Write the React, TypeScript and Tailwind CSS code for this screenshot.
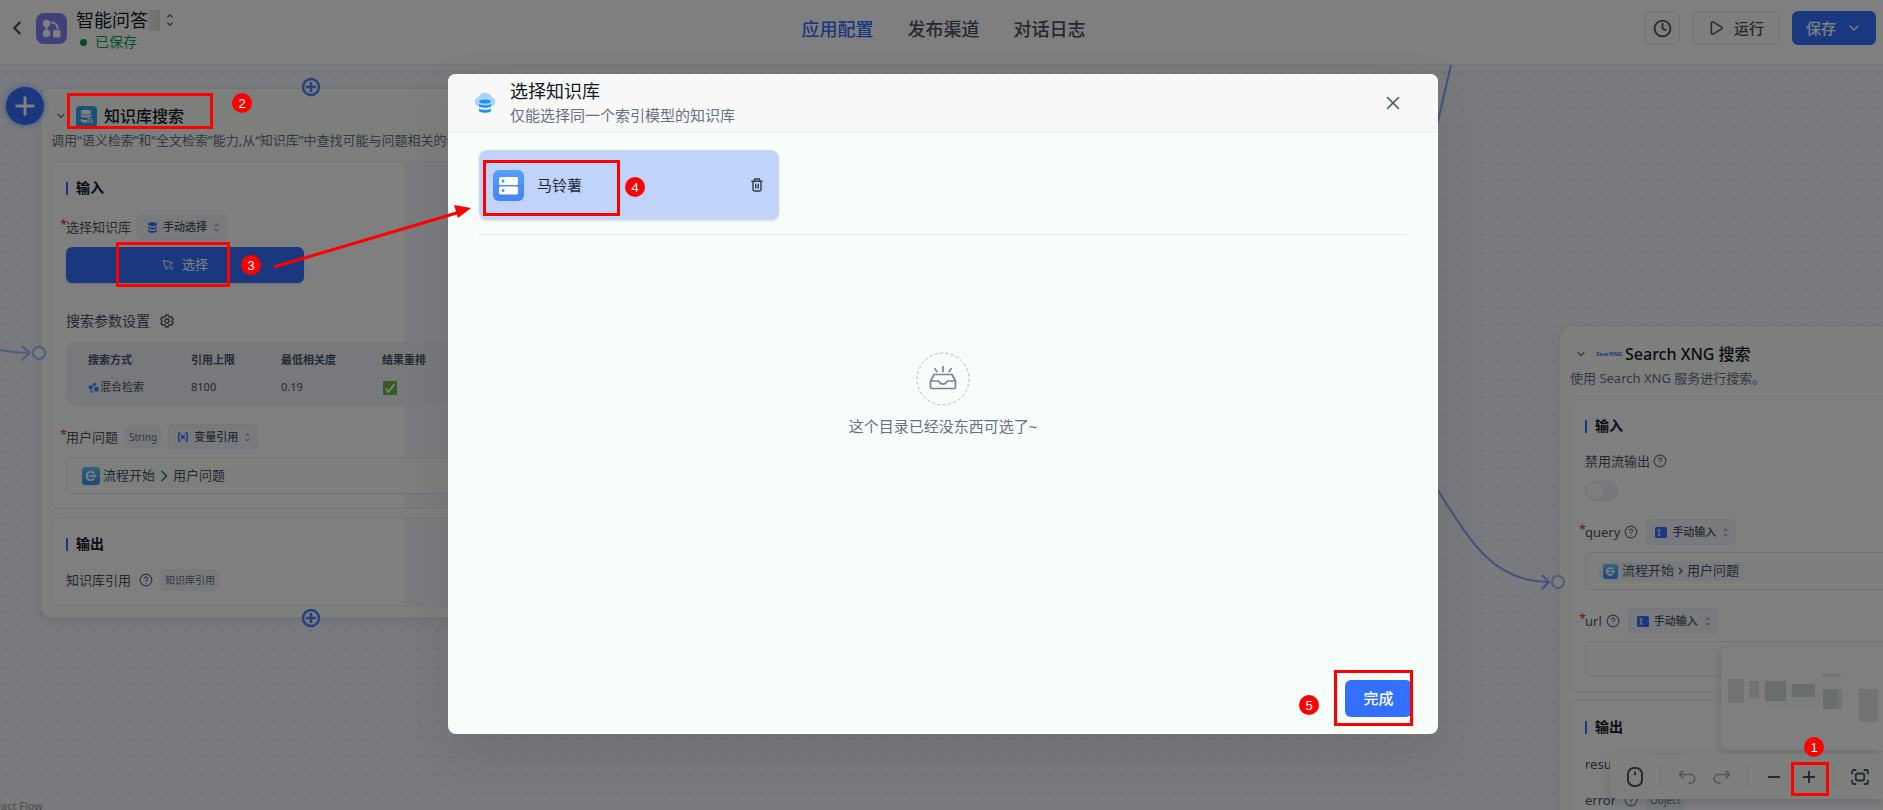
import React from 'react';
import { ChevronDown, ChevronLeft, CircleHelp, Clock, Play, X } from 'lucide-react';

function UpDown({ className }: { className: string }) {
  return (
    <svg viewBox="0 0 8 16" fill="none" stroke="currentColor" strokeWidth="1.6" strokeLinecap="round" strokeLinejoin="round" className={className}>
      <path d="M1.500 4.500 4 2 6.500 4.500M1.500 11.500 4 14 6.500 11.500" />
    </svg>
  );
}

function DatabaseGlyph({ className }: { className: string }) {
  return (
    <svg viewBox="0 0 12 12" fill="currentColor" className={className}>
      <ellipse cx="6" cy="2.400" rx="5" ry="2" />
      <path d="M1 4.600c1 1.300 3 1.500 5 1.500s4-.2 5-1.500v1.500c0 1.300-2.200 2-5 2s-5-.7-5-2z" />
      <path d="M1 8.300c1 1.300 3 1.500 5 1.500s4-.2 5-1.500v1.400c0 1.300-2.200 2-5 2s-5-.7-5-2z" />
    </svg>
  );
}

function VariableGlyph({ className }: { className: string }) {
  return (
    <svg viewBox="0 0 14 12" fill="none" stroke="currentColor" strokeWidth="1.7" strokeLinecap="round" className={className}>
      <path d="M3.500 1C2 1 2.300 2.500 2.300 4c0 1.300-.5 2-1.300 2 .8 0 1.300.7 1.300 2 0 1.500-.3 3 1.200 3M10.500 1c1.500 0 1.200 1.500 1.200 3 0 1.300.5 2 1.300 2-.8 0-1.300.7-1.300 2 0 1.500.3 3-1.200 3M5.300 4.300l3.400 3.400M8.700 4.300 5.300 7.700" />
    </svg>
  );
}

function ManualGlyph({ className }: { className: string }) {
  return (
    <svg viewBox="0 0 12 11" className={className}>
      <rect width="12" height="11" rx="1.500" fill="#3370ff" />
      <path d="M2.500 3h3M4 3v5M2.500 8h3" stroke="#fff" strokeWidth="1" />
    </svg>
  );
}

function StartIcon({ className }: { className: string }) {
  return (
    <svg viewBox="0 0 18 18" className={className}>
      <defs>
        <linearGradient id="startFill" x1="0" y1="0" x2="0" y2="1">
          <stop offset="0" stopColor="#61c6ff" />
          <stop offset="1" stopColor="#3a8df0" />
        </linearGradient>
      </defs>
      <rect width="18" height="18" rx="3.500" fill="url(#startFill)" />
      <path d="M11.500 5.900a4.100 4.100 0 1 0 0 6.200" fill="none" stroke="#fff" strokeWidth="2" strokeLinecap="round" />
      <path d="M7 9h5.500" fill="none" stroke="#fff" strokeWidth="1.600" strokeLinecap="round" />
      <path d="M11.800 6.800 14.800 9l-3 2.200z" fill="#fff" />
    </svg>
  );
}

function SectionTitle({ children }: { children: React.ReactNode }) {
  return (
    <h3 className="flex h-5 items-center gap-2 text-sm font-bold text-[#111824]">
      <span className="h-[13px] w-[2px] bg-[#3370ff]" />
      {children}
    </h3>
  );
}

function ModeSelect({ id, label, value, icon }: { id: string; label: string; value: string; icon: React.ReactNode }) {
  return (
    <div className="relative flex h-[26px] w-[90px] items-center rounded border border-[#ebeff4] bg-[#f0f4fa] text-[#485264]">
      <span className="pointer-events-none absolute left-2 flex w-3 justify-center text-[#3370ff]">{icon}</span>
      <select id={id} aria-label={label} className="h-full w-full appearance-none bg-transparent pl-[25px] text-[11px] font-medium outline-none">
        <option>{value}</option>
      </select>
      <UpDown className="pointer-events-none absolute right-[7px] h-[9px] w-[5px]" />
    </div>
  );
}

function FieldLabel({ htmlFor, required, children }: { htmlFor?: string; required?: boolean; children: React.ReactNode }) {
  return (
    <label htmlFor={htmlFor} className="relative text-[13px] leading-5 text-[#485264]">
      {required && <span className="absolute -top-[3px] -left-[6px] text-[#d92d20]">*</span>}
      {children}
    </label>
  );
}

function Tag({ children }: { children: React.ReactNode }) {
  return <span className="flex h-[22px] items-center rounded border border-[#edf1f6] bg-[#f0f4fa] px-[3px] text-[10px] text-[#667085]">{children}</span>;
}

function Help() {
  return <CircleHelp className="size-[14px] text-[#667085]" strokeWidth={2} />;
}

const nodeClass = 'absolute w-[542px] rounded-xl border border-[#e4e8ee] bg-[#fbfffa] px-[10px] pb-[11px] shadow-[0_4px_10px_rgba(19,51,107,0.08)]';
const panelClass = 'rounded-lg border border-[#eceff5] px-[14px] pb-[14px]';

function Header() {
  return (
    <header className="relative flex h-[65px] shrink-0 items-center justify-between border-b border-[#e8ebf0] bg-white pr-[7px] pb-2 pl-[6px]">
      <div className="flex items-center">
        <button aria-label="返回" className="text-[#485264]">
          <ChevronLeft className="size-[22px]" strokeWidth={2.500} />
        </button>
        <svg viewBox="0 0 31 31" className="ml-2 size-[31px]">
          <rect width="31" height="31" rx="8" fill="#7f83f0" />
          <g fill="#fff">
            <circle cx="10.500" cy="10.500" r="3.700" />
            <circle cx="10.500" cy="20.500" r="3.700" />
            <rect x="17" y="17" width="7.500" height="7.500" rx="1.500" />
          </g>
          <path d="M10.500 10.500v10M15.500 9.500c3.500 0 6 2.500 6 6" stroke="#fff" strokeWidth="2" fill="none" strokeLinecap="round" />
        </svg>
        <div className="ml-[9px] pt-1">
          <button className="flex h-6 items-center text-lg leading-6 text-[#111824]">
            智能问答
            <span className="h-[21px] w-3 bg-gradient-to-r from-[#ececec] to-[#dedede]" />
            <UpDown className="ml-[6px] h-[14px] w-2 text-[#667085]" />
          </button>
          <p className="flex h-5 items-center gap-2 pl-1 text-sm text-[#12a150]">
            <span className="size-[7px] rounded-full bg-[#039855]" />
            已保存
          </p>
        </div>
      </div>
      <nav className="absolute inset-x-0 top-[17px] mx-auto flex w-fit gap-[34px] pl-1 text-lg leading-6 font-medium text-[#485264]">
        <a href="#config" className="text-[#3370ff]">应用配置</a>
        <a href="#publish">发布渠道</a>
        <a href="#logs">对话日志</a>
      </nav>
      <div className="flex gap-[13px] text-[15px] font-medium">
        <button aria-label="历史版本" className="flex h-[34px] w-[35px] items-center justify-center rounded-md border border-[#dfe5ec] bg-[#fbfffa] text-[#485264]">
          <Clock className="size-[19px]" strokeWidth={2.300} />
        </button>
        <button className="flex h-[34px] w-[86px] items-center justify-center gap-[10px] rounded-md border border-[#dfe5ec] bg-[#fbfffa] text-[#485264]">
          <Play className="size-4" strokeWidth={2.300} />
          运行
        </button>
        <button className="flex h-[34px] w-[84px] items-center justify-center gap-[10px] rounded-md bg-[#3370ff] text-white">
          保存
          <ChevronDown className="size-4" strokeWidth={2} />
        </button>
      </div>
    </header>
  );
}

function SearchNode() {
  const split = 'bg-[linear-gradient(to_right,#ffffff_68%,#f4f7fd_68%)]';
  return (
    <section className={`${nodeClass} top-[23px] left-10`}>
      <div className="mt-[15px] flex h-6 items-center">
        <ChevronDown className="ml-1 size-3 text-[#667085]" strokeWidth={2.500} />
        <svg viewBox="0 0 22 22" className="ml-[9px] size-[21px]">
          <rect width="22" height="22" rx="4" fill="#35a5ee" />
          <ellipse cx="10.500" cy="6.500" rx="5.500" ry="2.500" fill="#fff" />
          <path d="M5 8.500c1.500 2 9.500 2 11 0v2.300c-1.500 2-9.500 2-11 0zM5 13c1 1.500 4.500 2 6.500 1.700l.7 2.600C9 17.800 5.700 17.200 5 15.500z" fill="#fff" />
          <circle cx="14.500" cy="14.800" r="2" fill="none" stroke="#fff" strokeWidth="1.200" />
          <path d="m16 16.400 1.500 1.500" stroke="#fff" strokeWidth="1.200" />
        </svg>
        <h2 className="ml-[7px] text-base font-medium text-[#111824]">知识库搜索</h2>
      </div>
      <p className="mt-[2px] mb-[11px] h-5 overflow-hidden text-[13px] leading-5 whitespace-nowrap text-[#667085]">
        调用“语义检索”和“全文检索”能力,从“知识库”中查找可能与问题相关的参考内容
      </p>

      <div className={`${panelClass} ${split} pt-4`}>
        <SectionTitle>输入</SectionTitle>
        <div className="mt-4 flex h-[26px] items-center gap-[6px]">
          <FieldLabel htmlFor="kb-mode" required>选择知识库</FieldLabel>
          <ModeSelect id="kb-mode" label="选择知识库" value="手动选择" icon={<DatabaseGlyph className="size-[11px]" />} />
        </div>
        <button className="mt-[7px] flex h-9 w-[238px] items-center justify-center gap-2 rounded-md bg-[#3370ff] text-[13px] text-white shadow-sm">
          <svg viewBox="0 0 12 12" fill="none" stroke="currentColor" strokeWidth="1" strokeLinejoin="round" className="size-3">
            <path d="M1 1.300 10.500 3.700 7.500 5.800 11 9.400 9.500 11 6 7.400 4.200 10.500Z" />
          </svg>
          选择
        </button>
        <div className="mt-7 flex h-5 items-center gap-2 text-sm text-[#485264]">
          搜索参数设置
          <button aria-label="搜索参数设置" className="ml-[2px]">
            <svg viewBox="0 0 14 14" fill="none" stroke="currentColor" strokeWidth="1.300" strokeLinejoin="round" className="size-[14px]">
              <path d="M5.700 1h2.600l.5 1.700 1.300.8 1.800-.5 1.300 2.200L12 6.500v1l1.200 1.300-1.300 2.200-1.800-.5-1.300.8L8.300 13H5.700l-.5-1.700-1.300-.8-1.800.5L.8 8.800 2 7.500v-1L.8 5.200 2.100 3l1.800.5 1.300-.8z" />
              <circle cx="7" cy="7" r="2" />
            </svg>
          </button>
        </div>
        <div className="mt-[11px] rounded-lg bg-[#eef3fb] py-[5px] pl-[22px]">
          <table className="w-full table-fixed border-collapse text-left text-[11px] text-[#485264]">
            <thead>
              <tr className="h-[27px]">
                <th className="w-[103px] p-0 font-bold">搜索方式</th>
                <th className="w-[90px] p-0 font-bold">引用上限</th>
                <th className="w-[101px] p-0 font-bold">最低相关度</th>
                <th className="p-0 font-bold">结果重排</th>
              </tr>
            </thead>
            <tbody>
              <tr className="h-[27px]">
                <td className="p-0">
                  <span className="flex items-center gap-[1px]">
                    <svg viewBox="0 0 12 12" fill="#2e8bff" className="size-[11px]">
                      <circle cx="7" cy="2.500" r="1.800" />
                      <circle cx="3" cy="5.700" r="2.400" />
                      <circle cx="9" cy="8" r="2.700" />
                      <circle cx="4" cy="10.300" r="1.400" />
                    </svg>
                    混合检索
                  </span>
                </td>
                <td className="p-0">8100</td>
                <td className="p-0">0.19</td>
                <td className="p-0">
                  <svg viewBox="0 0 14 14" className="ml-[1px] size-[14px]">
                    <rect width="14" height="14" rx="1" fill="#6fb53c" />
                    <path d="m2.500 7.500 3 3.500 6-8" fill="none" stroke="#fff" strokeWidth="1.900" />
                  </svg>
                </td>
              </tr>
            </tbody>
          </table>
        </div>
        <div className="mt-[18px] flex h-[26px] items-center gap-[7px]">
          <FieldLabel htmlFor="question-mode" required>用户问题</FieldLabel>
          <Tag>String</Tag>
          <ModeSelect id="question-mode" label="用户问题" value="变量引用" icon={<VariableGlyph className="h-3 w-[14px]" />} />
        </div>
        <button className="mt-[7px] flex h-[37px] w-full items-center rounded-md border border-[#e2e7ee] bg-[#fbfffa] pl-[15px] text-[13px] text-[#485264]">
          <StartIcon className="mr-[3px] size-[18px]" />
          流程开始
          <svg viewBox="0 0 8 12" fill="none" stroke="currentColor" strokeWidth="1.400" className="mx-[5px] h-3 w-2">
            <path d="m1.500 1 5 5-5 5" />
          </svg>
          用户问题
        </button>
      </div>

      <div className={`${panelClass} ${split} mt-2 pt-4`}>
        <SectionTitle>输出</SectionTitle>
        <div className="mt-[15px] flex h-[22px] items-center gap-2">
          <FieldLabel>知识库引用</FieldLabel>
          <Help />
          <Tag>知识库引用</Tag>
        </div>
      </div>
    </section>
  );
}

function XngNode() {
  return (
    <section className={`${nodeClass} top-[260px] left-[1559px]`}>
      <div className="mt-4 flex h-6 items-center">
        <ChevronDown className="ml-[5px] size-3 text-[#667085]" strokeWidth={2.500} />
        <span className="ml-[9px] w-[22px] text-center text-[6px] font-bold text-[#3370ff]">SearXNG</span>
        <h2 className="ml-[7px] text-base font-medium text-[#111824]">Search XNG 搜索</h2>
      </div>
      <p className="mt-[2px] h-5 text-[13px] leading-5 text-[#667085]">使用 Search XNG 服务进行搜索。</p>

      <div className={`${panelClass} mt-[11px] bg-white pt-4`}>
        <SectionTitle>输入</SectionTitle>
        <div className="mt-[15px] flex h-5 items-center gap-[3px]">
          <FieldLabel htmlFor="no-stream">禁用流输出</FieldLabel>
          <Help />
        </div>
        <input
          id="no-stream"
          type="checkbox"
          role="switch"
          className="mt-[10px] block h-5 w-[33px] appearance-none rounded-full border border-[#e6eaf0] bg-[#edf0f7] before:block before:size-[16px] before:translate-x-px before:translate-y-px before:rounded-full before:bg-[#fbfffa] checked:bg-[#3370ff] checked:before:translate-x-3"
        />
        <div className="mt-[18px] flex h-[26px] items-center gap-1">
          <FieldLabel htmlFor="query-mode" required>query</FieldLabel>
          <Help />
          <div className="ml-1">
            <ModeSelect id="query-mode" label="query" value="手动输入" icon={<ManualGlyph className="h-[11px] w-3" />} />
          </div>
        </div>
        <button className="mt-[7px] flex h-[38px] w-full items-center rounded-md border border-[#e2e7ee] bg-[#fbfffa] pl-3 text-[13px] text-[#485264]">
          <span className="flex h-[19px] items-center rounded bg-[#f0f4fa] px-[5px]">
            <StartIcon className="mr-1 size-[15px]" />
            流程开始
            <svg viewBox="0 0 5 8" fill="none" stroke="currentColor" strokeWidth="1.200" className="mx-1 h-2 w-[5px]">
              <path d="m1 1 3 3-3 3" />
            </svg>
            用户问题
          </span>
        </button>
        <div className="mt-[18px] flex h-[26px] items-center gap-1">
          <FieldLabel htmlFor="url-value" required>url</FieldLabel>
          <Help />
          <div className="ml-1">
            <ModeSelect id="url-mode" label="url" value="手动输入" icon={<ManualGlyph className="h-[11px] w-3" />} />
          </div>
        </div>
        <input id="url-value" type="text" className="mt-[7px] block h-9 w-full rounded-md border border-[#e2e7ee] bg-[#fbfffa] px-3 text-[13px]" />
      </div>

      <div className={`${panelClass} mt-2 bg-white pt-4`}>
        <SectionTitle>输出</SectionTitle>
        <div className="mt-4 flex h-[22px] items-center gap-2">
          <FieldLabel>result</FieldLabel>
          <Help />
          <Tag>String</Tag>
        </div>
        <div className="mt-[14px] flex h-[22px] items-center gap-2">
          <FieldLabel>error</FieldLabel>
          <Help />
          <Tag>Object</Tag>
        </div>
      </div>
    </section>
  );
}

function Edges() {
  return (
    <svg className="pointer-events-none absolute inset-0 h-full w-full" fill="none" stroke="#9db8ff" strokeWidth="2">
      <path d="M0 285 C10 287 18 288 29 288M22 281l8 7-8 7" />
      <path d="M1451 0 1430 90" stroke="#7ea4ff" />
      <path d="M1430 413C1470 475 1490 516 1548 517M1542 510l7 7-7 7" stroke="#7ea4ff" />
      <circle cx="39" cy="288" r="6" fill="#fbfffa" />
      <circle cx="1558" cy="517" r="6" fill="#fbfffa" />
      <g stroke="#4f7cff" fill="#f0f4fa" strokeWidth="2.500">
        <circle cx="311" cy="22" r="8" />
        <circle cx="311" cy="553" r="8" />
        <path d="M306 22h10M311 17v10M306 553h10M311 548v10" />
      </g>
    </svg>
  );
}

function MiniMap() {
  return (
    <div className="absolute right-0 bottom-[60px] h-[103px] w-[162px] rounded-l-lg bg-white shadow-[-2px_2px_8px_rgba(19,51,107,0.15)]">
      <svg viewBox="0 0 162 103" className="h-full w-full" fill="#e6e6e6">
        <rect x="42" y="33" width="74" height="28" fill="#fbfffa" />
        <rect x="7" y="32" width="16" height="24" />
        <rect x="28" y="34" width="10" height="17" />
        <rect x="44" y="34" width="21" height="20" fill="#d3dcd4" />
        <rect x="71" y="37" width="23" height="13" fill="#d3dcd4" />
        <rect x="101" y="27" width="19" height="3" />
        <rect x="102" y="42" width="14" height="20" fill="#d3dcd4" />
        <rect x="116" y="42" width="5" height="20" />
        <rect x="138" y="42" width="19" height="33" />
      </svg>
    </div>
  );
}

function Toolbar() {
  return (
    <div className="absolute right-0 bottom-[11px] flex h-[45px] w-[273px] items-center rounded-l-lg bg-[#fbfffa] pl-4 text-[#485264] shadow-[0_4px_12px_rgba(19,51,107,0.18)]">
      <button aria-label="鼠标模式" className="flex w-[18px] justify-center">
        <svg viewBox="0 0 16 20" fill="none" stroke="currentColor" strokeWidth="2" strokeLinecap="round" className="h-5 w-4">
          <rect x="1" y="1" width="14" height="18" rx="6" />
          <path d="M8 5.500v2" />
        </svg>
      </button>
      <span className="ml-4 h-[21px] w-px bg-[#e2e7ee]" />
      <button aria-label="撤销" className="ml-[17px] text-[#a5abb6]">
        <svg viewBox="0 0 18 14" fill="none" stroke="currentColor" strokeWidth="1.600" strokeLinecap="round" strokeLinejoin="round" className="h-[14px] w-[18px]">
          <path d="M5 1 1.500 4.500 5 8M2 4.500h10.500a4 4 0 0 1 0 8.500H11" />
        </svg>
      </button>
      <button aria-label="重做" className="ml-[17px] text-[#a5abb6]">
        <svg viewBox="0 0 18 14" fill="none" stroke="currentColor" strokeWidth="1.600" strokeLinecap="round" strokeLinejoin="round" className="h-[14px] w-[18px]">
          <path d="M13 1l3.500 3.500L13 8M16 4.500H5.500a4 4 0 0 0 0 8.500H7" />
        </svg>
      </button>
      <span className="ml-4 h-[21px] w-px bg-[#e2e7ee]" />
      <button aria-label="缩小" className="ml-[19px]">
        <svg viewBox="0 0 14 14" stroke="currentColor" strokeWidth="2" className="size-[14px]"><path d="M1 7h12" /></svg>
      </button>
      <button aria-label="放大" className="ml-[21px]">
        <svg viewBox="0 0 14 14" stroke="currentColor" strokeWidth="2" className="size-[14px]"><path d="M1 7h12M7 1v12" /></svg>
      </button>
      <span className="ml-[17px] h-[21px] w-px bg-[#e2e7ee]" />
      <button aria-label="适应视图" className="ml-[17px]">
        <svg viewBox="0 0 18 16" fill="none" stroke="currentColor" strokeWidth="1.800" strokeLinecap="round" className="h-4 w-[18px]">
          <path d="M1 4.500V3a2 2 0 0 1 2-2h1.500M13.500 1H15a2 2 0 0 1 2 2v1.500M17 11.500V13a2 2 0 0 1-2 2h-1.500M4.500 15H3a2 2 0 0 1-2-2v-1.500" />
          <rect x="4.800" y="4.500" width="8.400" height="7" rx="1.500" />
        </svg>
      </button>
    </div>
  );
}

function Marker({ n, className }: { n: number; className: string }) {
  return (
    <span className={`pointer-events-none absolute flex size-5 items-center justify-center rounded-full bg-[#ff0000] font-['Liberation_Sans',sans-serif] text-[13px] leading-none text-white ${className}`}>
      {n}
    </span>
  );
}

function Frame({ className }: { className: string }) {
  return <span className={`pointer-events-none absolute border-3 border-[#ff0000] ${className}`} />;
}

function Dialog() {
  return (
    <div role="dialog" aria-modal="true" aria-labelledby="dialog-title" className="relative flex h-[660px] w-full max-w-[990px] flex-col rounded-lg bg-[#f7fdf9] shadow-[0_20px_48px_rgba(60,60,60,0.14)]">
      <div className="flex h-[59px] shrink-0 items-center rounded-t-lg border-b border-[#eff2f2] bg-[#f8f8f8] pr-[34px] pl-[26px]">
        <svg viewBox="0 0 22 22" className="size-[22px]">
          <path d="M5 14.500a4.700 4.700 0 0 1-.8-9.200C5.500 2.500 8 .8 11 .8s5.500 1.700 6.800 4.500A4.700 4.700 0 0 1 17 14.500z" fill="#a9d5fb" />
          <g fill="#1e8ffb">
            <ellipse cx="11" cy="9.500" rx="6" ry="2" />
            <path d="M5 12c1.500 1.700 10.500 1.700 12 0v2c0 2.400-12 2.400-12 0zM5 16.500c1.500 1.700 10.500 1.700 12 0v2.300c0 2.600-12 2.600-12 0z" />
          </g>
        </svg>
        <div className="ml-[14px] flex-1">
          <h2 id="dialog-title" className="text-lg leading-6 text-[#111824]">选择知识库</h2>
          <p className="text-[15px] leading-6 text-[#667085]">仅能选择同一个索引模型的知识库</p>
        </div>
        <button aria-label="关闭" className="text-[#485264]">
          <X className="size-[22px]" strokeWidth={1.700} />
        </button>
      </div>
      <div className="flex flex-1 flex-col px-[31px] pt-[17px]">
        <div className="border-b border-[#e8ecee] pb-[14px]">
          <div className="flex h-[70px] w-[300px] items-center rounded-lg border border-[#cbd8ea] bg-[#c0d3f8] px-[13px] shadow-sm">
            <svg viewBox="0 0 31 31" className="size-[31px]">
              <defs>
                <linearGradient id="datasetFill" x1="0" y1="0" x2="0" y2="1">
                  <stop offset="0" stopColor="#569ffb" />
                  <stop offset="1" stopColor="#4284f6" />
                </linearGradient>
              </defs>
              <rect width="31" height="31" rx="6" fill="url(#datasetFill)" />
              <rect x="6" y="7" width="19" height="8" rx="1.500" fill="#fff" />
              <rect x="6" y="16.500" width="19" height="8" rx="1.500" fill="#fff" />
              <circle cx="10" cy="11" r="1.500" fill="#4a90f8" />
              <circle cx="10" cy="20.500" r="1.500" fill="#4a90f8" />
            </svg>
            <span className="ml-[13px] flex-1 text-[15px] text-[#1d2736]">马铃薯</span>
            <button aria-label="删除" className="mr-[2px] text-[#333d4e]">
              <svg viewBox="0 0 12 14" fill="none" stroke="currentColor" strokeWidth="1.400" strokeLinecap="round" strokeLinejoin="round" className="h-[14px] w-3">
                <path d="M.8 3.300h10.400M3.500 3V1h5v2M2 3.300v8a1.600 1.600 0 0 0 1.600 1.700h4.800a1.600 1.600 0 0 0 1.600-1.700v-8M4.800 6.300v3.700M7.200 6.300v3.700" />
              </svg>
            </button>
          </div>
        </div>
        <div className="flex flex-1 flex-col items-center pt-[117px]">
          <svg viewBox="0 0 54 54" fill="none" className="size-[54px]">
            <circle cx="27" cy="27" r="26" stroke="#b4bac0" strokeWidth="1" strokeDasharray="3 2.400" />
            <g stroke="#7a838f" strokeWidth="1.700" strokeLinecap="round" strokeLinejoin="round">
              <path d="M14.500 29 18 22.500h18L39.500 29v6a1.500 1.500 0 0 1-1.500 1.500H16a1.500 1.500 0 0 1-1.500-1.500zM14.500 29H22c1.300 0 1.500 3.200 5 3.200s3.700-3.200 5-3.200h7.500M27 14.500v5M18.800 16.800l2 2.700M35.200 16.800l-2 2.700" />
            </g>
          </svg>
          <p className="mt-2 text-[15px] leading-6 text-[#667085]">这个目录已经没东西可选了~</p>
        </div>
      </div>
      <div className="flex justify-end pr-[26px] pb-[17px]">
        <button className="h-[37px] w-[67px] rounded-md bg-[#3370ff] text-[15px] font-medium text-white">完成</button>
      </div>
      <Frame className="top-[86px] left-[35px] h-14 w-[137px]" />
      <Marker n={4} className="top-[103px] left-[177px]" />
      <Frame className="right-[25px] bottom-2 h-14 w-[79px]" />
      <Marker n={5} className="right-[119px] bottom-[19px]" />
    </div>
  );
}

export default function App() {
  return (
    <div lang="zh-CN" className="relative flex h-screen flex-col overflow-hidden bg-white font-['Noto_Sans','Noto_Sans_CJK_SC',sans-serif]">
      <Header />
      <main className="relative flex-1 overflow-hidden bg-[#f0f4fa] bg-[radial-gradient(circle,#dcdfe4_1px,transparent_1px)] bg-[size:18px_18px] bg-[position:-4px_-1px]">
        <SearchNode />
        <XngNode />
        <Edges />
        <button aria-label="添加节点" className="absolute top-[22px] left-[6px] flex size-[38px] items-center justify-center rounded-full bg-[#3370ff] text-white shadow-[0_0_6px_rgba(51,112,255,0.6)]">
          <svg viewBox="0 0 18 18" stroke="currentColor" strokeWidth="2.600" strokeLinecap="round" className="size-[20px]"><path d="M1.500 9h15M9 1.500v15" /></svg>
        </button>
        <a href="#flow" className="absolute -bottom-1 -left-3 text-[11px] leading-4 text-[#999999]">React Flow</a>
        <MiniMap />
        <Toolbar />
      </main>
      <div className="absolute inset-0 flex items-center justify-center bg-black/50 pb-[2px] pl-[3px]">
        <Dialog />
      </div>
      <Frame className="top-[93px] left-[67px] h-9 w-[146px]" />
      <Marker n={2} className="top-[93px] left-[232px]" />
      <Frame className="top-[242px] left-[116px] h-[45px] w-[114px]" />
      <Marker n={3} className="top-[255px] left-[241px]" />
      <svg className="pointer-events-none absolute inset-0 h-full w-full">
        <path d="M274 267 460 212" stroke="#ff0000" strokeWidth="3" />
        <path d="m471 208-17-3 4 13z" fill="#ff0000" />
      </svg>
      <Frame className="right-[54px] bottom-[14px] h-[34px] w-[38px]" />
      <Marker n={1} className="right-[59px] bottom-[53px]" />
    </div>
  );
}
